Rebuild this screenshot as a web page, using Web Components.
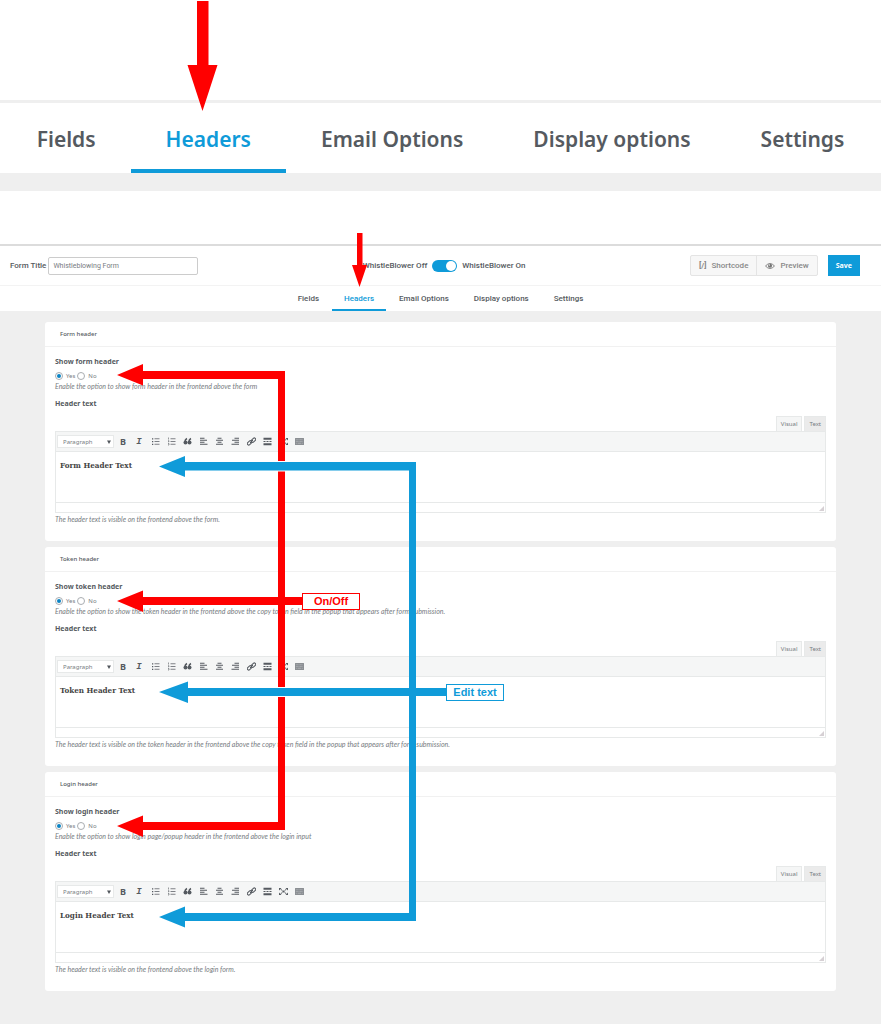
<!DOCTYPE html>
<html lang="en">
<head>
<meta charset="utf-8">
<meta name="viewport" content="width=device-width, initial-scale=1">
<title>Whistleblowing Form - Headers</title>
<style>
    :root {
        --accent: #0f9bd9;
        --ink: #555a60;
        --muted: #777c81;
        --line: #e7e9e9;
        --canvas: #efefef;
    }

    body {
        margin: 0;
        background: var(--canvas);
        color: var(--ink);
        font-family: "Noto Sans", "Open Sans", sans-serif;
        font-size: 7px;
    }
</style>
</head>
<body>
<whistle-page>
    <tab-bar slot="closeup" size="large" active="Headers"></tab-bar>
    <form-toolbar slot="toolbar" form-title="Whistleblowing Form"></form-toolbar>
    <tab-bar slot="tabs" active="Headers"></tab-bar>

    <header-card name="form" value="Form Header Text">
        <span slot="title">Form header</span>
        <span slot="question">Show form header</span>
        <span slot="hint">Enable the option to show form header in the frontend above the form</span>
        <span slot="note">The header text is visible on the frontend above the form.</span>
    </header-card>
    <header-card name="token" value="Token Header Text">
        <span slot="title">Token header</span>
        <span slot="question">Show token header</span>
        <span slot="hint">Enable the option to show the token header in the frontend above the copy token field in the popup that appears after form submission.</span>
        <span slot="note">The header text is visible on the token header in the frontend above the copy token field in the popup that appears after form submission.</span>
    </header-card>
    <header-card name="login" value="Login Header Text">
        <span slot="title">Login header</span>
        <span slot="question">Show login header</span>
        <span slot="hint">Enable the option to show login page/popup header in the frontend above the login input</span>
        <span slot="note">The header text is visible on the frontend above the login form.</span>
    </header-card>

    <guide-arrows slot="guide">
        <span slot="switch">On/Off</span>
        <span slot="edit">Edit text</span>
    </guide-arrows>
</whistle-page>

<script>
// Page frame: close-up of the tabs on top, the form editor below
class WhistlePage extends HTMLElement {
    constructor() {
        super();
        this.attachShadow({ mode: 'open' });
        this.shadowRoot.innerHTML = `
            <style>
                :host {
                    display: block;
                    position: relative;
                    min-height: 100vh;
                }

                .closeup {
                    padding-top: 100px;
                    background: #fff;
                    border-bottom: 18px solid var(--canvas);
                }

                .editor {
                    padding-top: 53px;
                    background: #fff;
                }

                main {
                    display: flex;
                    flex-direction: column;
                    gap: 6px;
                    padding: 11px 45px 32px;
                    background: var(--canvas);
                }
            </style>
            <section class="closeup"><slot name="closeup"></slot></section>
            <section class="editor">
                <slot name="toolbar"></slot>
                <slot name="tabs"></slot>
                <main><slot></slot></main>
            </section>
            <slot name="guide"></slot>
        `;
    }
}

class TabBar extends HTMLElement {
    static get TABS() {
        return ['Fields', 'Headers', 'Email Options', 'Display options', 'Settings'];
    }

    constructor() {
        super();
        this.attachShadow({ mode: 'open' });
    }

    connectedCallback() {
        const active = this.getAttribute('active');
        const links = TabBar.TABS.map((tab) => `
            <a href="#${tab.toLowerCase().replace(' ', '-')}" ${tab === active ? 'aria-current="page"' : ''}>${tab}</a>
        `).join('');

        this.shadowRoot.innerHTML = `
            <style>
                :host {
                    display: block;
                    border-top: 1px solid #f3f3f3;
                    background: #fff;
                }

                nav {
                    display: flex;
                    justify-content: center;
                    gap: 1px;
                }

                a {
                    box-sizing: border-box;
                    height: 25px;
                    padding: 0 12px;
                    border-bottom: 2px solid transparent;
                    color: var(--ink);
                    font-family: Roboto, sans-serif;
                    font-size: 8px;
                    font-weight: 500;
                    line-height: 25px;
                    text-decoration: none;
                    white-space: nowrap;
                }

                a[aria-current] {
                    border-color: var(--accent);
                    color: var(--accent);
                }

                :host([size="large"]) {
                    border-top: 3px solid var(--canvas);
                }

                :host([size="large"]) nav {
                    gap: 0;
                }

                :host([size="large"]) a {
                    height: 70px;
                    padding: 0 35px;
                    border-bottom-width: 4px;
                    font-family: "Noto Sans", sans-serif;
                    font-size: 21px;
                    font-weight: 600;
                    line-height: 72px;
                }
            </style>
            <nav>${links}</nav>
        `;
    }
}

class FormToolbar extends HTMLElement {
    constructor() {
        super();
        this.attachShadow({ mode: 'open' });
    }

    connectedCallback() {
        this.shadowRoot.innerHTML = `
            <style>
                :host {
                    display: flex;
                    align-items: center;
                    justify-content: space-between;
                    height: 39px;
                    padding: 0 21px 0 10px;
                    border-top: 2px solid #dcdcdc;
                    background: #fff;
                    font-family: Roboto, sans-serif;
                    font-size: 8px;
                    font-weight: 500;
                    white-space: nowrap;
                }

                .title, .toggle, .actions, .group {
                    display: flex;
                    align-items: center;
                }

                .title {
                    gap: 2px;
                }

                .title input {
                    box-sizing: border-box;
                    width: 150px;
                    height: 18px;
                    padding: 0 4px;
                    border: 1px solid #ccc;
                    border-radius: 2px;
                    color: var(--muted);
                    font-family: inherit;
                    font-size: 7px;
                }

                .toggle {
                    gap: 5px;
                }

                .toggle input {
                    appearance: none;
                    display: flex;
                    box-sizing: border-box;
                    width: 25px;
                    height: 12px;
                    margin: 0;
                    padding: 1px;
                    border-radius: 6px;
                    background: #ccc;
                }

                .toggle input::before {
                    content: "";
                    width: 10px;
                    height: 10px;
                    border-radius: 50%;
                    background: #fff;
                }

                .toggle input:checked {
                    justify-content: flex-end;
                    background: var(--accent);
                }

                .actions {
                    gap: 10px;
                }

                .group {
                    border: 1px solid #e4e4e4;
                    border-radius: 2px;
                    background: #f7f7f7;
                }

                button {
                    display: flex;
                    align-items: center;
                    gap: 5px;
                    height: 19px;
                    padding: 0 8px;
                    border: 0;
                    background: none;
                    color: #888;
                    font: inherit;
                }

                button + button {
                    border-left: 1px solid #e4e4e4;
                }

                .save {
                    height: 21px;
                    background: var(--accent);
                    color: #fff;
                    font: 700 7px "Noto Sans", sans-serif;
                }

                svg {
                    width: 10px;
                    height: 8px;
                }
            </style>
            <label class="title">Form Title
                <input type="text" value="${this.getAttribute('form-title')}">
            </label>
            <label class="toggle">
                <span>WhistleBlower Off</span>
                <input type="checkbox" role="switch" checked>
                <span>WhistleBlower On</span>
            </label>
            <div class="actions">
                <div class="group">
                    <button type="button"><b>[/]</b>Shortcode</button>
                    <button type="button">
                        <svg viewBox="0 0 20 16" aria-hidden="true">
                            <path d="M1 8Q10-2 19 8Q10 18 1 8Z" fill="none" stroke="#888" stroke-width="2"/>
                            <circle cx="10" cy="7.500" r="4.200" fill="#777"/>
                            <circle cx="8.600" cy="6" r="1.300" fill="#f7f7f7"/>
                        </svg>
                        Preview
                    </button>
                </div>
                <button type="button" class="save">Save</button>
            </div>
        `;
    }
}

// Rich text editor with its Visual/Text tabs and one toolbar row
class RichEditor extends HTMLElement {
    static get TOOLS() {
        return {
            'Bold': '<b>B</b>',
            'Italic': '<i>I</i>',
            'Bulleted list': '<svg viewBox="0 0 18 18"><path d="M7 3.500H17M7 9H17M7 14.500H17" stroke-width="1.500"/><path d="M2 3.500H4.500M2 9H4.500M2 14.500H4.500" stroke-width="2.500"/></svg>',
            'Numbered list': '<svg viewBox="0 0 18 18"><path d="M7 3.500H17M7 9H17M7 14.500H17" stroke-width="1.500"/><path d="M3 1V5M2 7.500H4V9.500H2M2 13H4V16H2" stroke-width="1.200"/></svg>',
            'Blockquote': '<svg viewBox="0 0 18 18"><path d="M8 3Q4 5 4 9M16 3Q12 5 12 9" stroke-width="3"/><circle cx="5" cy="11" r="4" class="solid"/><circle cx="13" cy="11" r="4" class="solid"/></svg>',
            'Align left': '<svg viewBox="0 0 18 18"><path d="M2 2.500H11M2 6.500H16M2 10.500H11M2 14.500H17"/></svg>',
            'Align center': '<svg viewBox="0 0 18 18"><path d="M5 2.500H13M2 6.500H16M5 10.500H13M2 14.500H16"/></svg>',
            'Align right': '<svg viewBox="0 0 18 18"><path d="M7 2.500H16M2 6.500H16M7 10.500H16M1 14.500H16"/></svg>',
            'Insert link': '<svg viewBox="0 0 18 18"><rect x="8" y="3.500" width="10" height="5.500" rx="2.700" transform="rotate(-45 13 6.200)"/><rect x="0" y="9" width="10" height="5.500" rx="2.700" transform="rotate(-45 5 11.700)"/><path d="M6 12L12 6"/></svg>',
            'Read more': '<svg viewBox="0 0 18 18"><path d="M1 3.500H17M1 14.500H17" stroke-width="4"/><path d="M1 9H5M7 9H11M13 9H17"/></svg>',
            'Fullscreen': '<svg viewBox="0 0 18 18"><path d="M3 4L7 7.500M15 4L11 7.500M3 14L7 10.500M15 14L11 10.500"/><path d="M0 2H5L0 7ZM18 2H13L18 7ZM0 16H5L0 11ZM18 16H13L18 11Z" class="solid"/><circle cx="9" cy="9" r="2" class="solid"/></svg>',
            'Toolbar toggle': '<svg viewBox="0 0 20 18"><rect x="0" y="1" width="20" height="16" rx="1" fill="#8b8f93" stroke="none"/><path d="M2 5H18M2 9H18" stroke="#b9bcbf" stroke-width="1.500" stroke-dasharray="2 1"/><path d="M2 13H4M6 13H14M16 13H18" stroke="#b9bcbf" stroke-width="1.500"/></svg>'
        };
    }

    constructor() {
        super();
        this.attachShadow({ mode: 'open' });
    }

    connectedCallback() {
        const tools = Object.entries(RichEditor.TOOLS).map(([name, icon]) => `
            <button type="button" aria-label="${name}">${icon}</button>
        `).join('');

        this.shadowRoot.innerHTML = `
            <style>
                :host {
                    display: block;
                }

                button {
                    margin: 0;
                    padding: 0;
                    border: 0;
                    background: none;
                    color: var(--ink);
                    font: inherit;
                }

                .modes {
                    display: flex;
                    justify-content: flex-end;
                    gap: 2px;
                    height: 15px;
                }

                .modes button {
                    padding: 0 4px;
                    border: 1px solid var(--line);
                    border-bottom: 0;
                    background: #ebebeb;
                    color: var(--muted);
                    font-size: 6px;
                }

                .modes button[aria-pressed="true"] {
                    background: #f5f6f6;
                }

                .tools {
                    display: flex;
                    align-items: center;
                    box-sizing: border-box;
                    height: 21px;
                    padding-left: 1px;
                    border: 1px solid var(--line);
                    background: #f5f6f6;
                }

                .tools button {
                    display: grid;
                    place-items: center;
                    width: 16px;
                    height: 16px;
                    font-size: 9px;
                    line-height: 16px;
                }

                .tools i {
                    font-family: "Liberation Mono", monospace;
                    font-size: 9px;
                    font-weight: 700;
                }

                .format {
                    display: grid;
                    align-items: center;
                    margin-right: 1px;
                }

                .format > * {
                    grid-area: 1 / 1;
                }

                select {
                    appearance: none;
                    box-sizing: border-box;
                    width: 57px;
                    height: 13px;
                    padding: 0 5px;
                    border: 1px solid var(--line);
                    border-radius: 0;
                    background: #fff;
                    color: var(--muted);
                    font: 6px "Noto Sans", sans-serif;
                }

                .format svg {
                    justify-self: end;
                    width: 4px;
                    height: 4px;
                    margin-right: 3px;
                    pointer-events: none;
                }

                .tools button svg {
                    width: 9px;
                    height: 9px;
                    fill: none;
                    stroke: var(--ink);
                    stroke-width: 2;
                }

                .solid {
                    fill: var(--ink);
                    stroke: none;
                }

                textarea {
                    display: block;
                    box-sizing: border-box;
                    width: 100%;
                    height: 50px;
                    margin: 0;
                    padding: 7px 4px;
                    border: 1px solid var(--line);
                    border-width: 0 1px;
                    border-radius: 0;
                    background: #fff;
                    color: #444;
                    font: bold 8px/13px "DejaVu Serif Condensed", "DejaVu Serif", serif;
                    resize: none;
                }

                .status {
                    display: flex;
                    align-items: flex-end;
                    justify-content: flex-end;
                    box-sizing: border-box;
                    height: 11px;
                    padding: 1px;
                    border: 1px solid var(--line);
                }

                .status svg {
                    width: 5px;
                    height: 5px;
                }
            </style>
            <div class="modes">
                <button type="button" aria-pressed="true">Visual</button>
                <button type="button" aria-pressed="false">Text</button>
            </div>
            <div class="tools">
                <div class="format">
                    <select aria-label="Text format"><option>Paragraph</option></select>
                    <svg viewBox="0 0 8 8" aria-hidden="true"><path d="M0 1H8L4 8Z" fill="#50555b"/></svg>
                </div>
                ${tools}
            </div>
            <textarea aria-label="Header text">${this.getAttribute('value')}</textarea>
            <div class="status">
                <svg viewBox="0 0 6 6" aria-hidden="true"><path d="M0 6L6 0V6Z" fill="#d6d0d4"/></svg>
            </div>
        `;
    }
}

class HeaderCard extends HTMLElement {
    constructor() {
        super();
        this.attachShadow({ mode: 'open' });
    }

    connectedCallback() {
        const name = this.getAttribute('name');

        this.shadowRoot.innerHTML = `
            <style>
                :host {
                    display: block;
                    border-radius: 3px;
                    background: #fff;
                }

                h2, h3, p, fieldset {
                    margin: 0;
                    padding: 0;
                    border: 0;
                }

                h2 {
                    padding: 0 15px;
                    border-bottom: 1px solid #f1f1f1;
                    font-size: 6px;
                    font-weight: 500;
                    line-height: 24px;
                }

                .body {
                    padding: 9px 10px 16px;
                }

                h3, legend {
                    padding: 0;
                    font-size: 7px;
                    font-weight: 700;
                    line-height: 12px;
                }

                h3 {
                    margin: 6px 0;
                }

                .choices {
                    display: flex;
                    align-items: center;
                    gap: 2px;
                    height: 10px;
                    margin-top: 3px;
                    color: var(--muted);
                    font-size: 6px;
                }

                .choices label {
                    display: flex;
                    align-items: center;
                    gap: 3px;
                }

                .choices input {
                    appearance: none;
                    display: grid;
                    place-items: center;
                    box-sizing: border-box;
                    width: 8px;
                    height: 8px;
                    margin: 0;
                    border: 1px solid #a9adb1;
                    border-radius: 50%;
                    background: #fff;
                }

                .choices input:checked::before {
                    content: "";
                    width: 4px;
                    height: 4px;
                    border-radius: 50%;
                    background: #0a84c4;
                }

                p {
                    color: var(--muted);
                    font-family: Lato, sans-serif;
                    font-size: 7px;
                    font-style: italic;
                    line-height: 11px;
                }

                .note {
                    margin-top: 1px;
                }
            </style>
            <h2><slot name="title"></slot></h2>
            <div class="body">
                <fieldset>
                    <legend><slot name="question"></slot></legend>
                    <div class="choices">
                        <label><input type="radio" name="${name}" value="yes" checked>Yes</label>
                        <label><input type="radio" name="${name}" value="no">No</label>
                    </div>
                </fieldset>
                <p><slot name="hint"></slot></p>
                <h3>Header text</h3>
                <rich-editor value="${this.getAttribute('value')}"></rich-editor>
                <p class="note"><slot name="note"></slot></p>
            </div>
        `;
    }
}

// Arrows and call-outs that lie over the page
class GuideArrows extends HTMLElement {
    constructor() {
        super();
        this.attachShadow({ mode: 'open' });
        this.shadowRoot.innerHTML = `
            <style>
                :host {
                    display: block;
                    position: absolute;
                    inset: 0;
                    overflow: hidden;
                    pointer-events: none;
                }

                svg {
                    display: block;
                    width: 881px;
                    height: 1024px;
                }

                .red {
                    fill: #f00;
                    color: #f00;
                }

                .blue {
                    fill: var(--accent);
                    color: var(--accent);
                }

                .callout {
                    position: absolute;
                    box-sizing: border-box;
                    width: 58px;
                    height: 17px;
                    border: 1px solid currentColor;
                    background: #fff;
                    font: bold 11px/15px "Liberation Sans", Arial, sans-serif;
                    text-align: center;
                    white-space: nowrap;
                }

                .callout.red {
                    left: 302px;
                    top: 593px;
                }

                .callout.blue {
                    left: 446px;
                    top: 684px;
                }
            </style>
            <svg viewBox="0 0 881 1024" aria-hidden="true">
                <g class="red">
                    <path d="M197 1H208.500V65H217.500L202.500 111L187.500 65H197Z"/>
                    <path d="M357 233H362.500V265H367L359.500 287L352 265H357Z"/>
                    <path d="M117 375L143 364V371H285V830H143V837L117 826L143 815.500V822H278V605H143V612L117 601L143 590.500V597H278V379H143V385.500Z"/>
                    <path d="M280 597H304V605H280Z"/>
                </g>
                <path d="M276 461H287V471.500H276ZM276 687H287V697H276Z" fill="#fff"/>
                <g class="blue">
                    <path d="M159 466.500L185 456V462H416V921H185V927.500L159 917L185 906.500V913H409V696H188V703L159 692L188 681.500V688H409V470.500H185V477Z"/>
                    <path d="M412 688H448V696H412Z"/>
                </g>
            </svg>
            <div class="callout red"><slot name="switch"></slot></div>
            <div class="callout blue"><slot name="edit"></slot></div>
        `;
    }
}

customElements.define('whistle-page', WhistlePage);
customElements.define('tab-bar', TabBar);
customElements.define('form-toolbar', FormToolbar);
customElements.define('rich-editor', RichEditor);
customElements.define('header-card', HeaderCard);
customElements.define('guide-arrows', GuideArrows);
</script>
</body>
</html>
